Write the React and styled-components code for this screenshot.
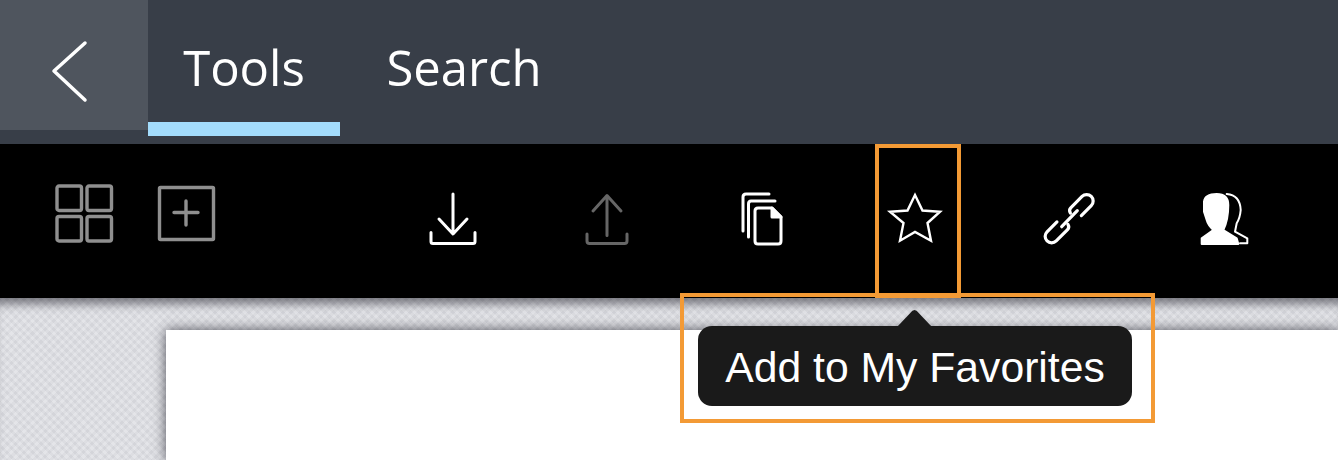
import React from "react";
import styled, { createGlobalStyle } from "styled-components";

const GlobalStyle = createGlobalStyle`
  html, body { margin: 0; padding: 0; background: #fff; }
  #root { width: 1338px; height: 460px; overflow: hidden; }
`;

const Page = styled.div`
  position: relative;
  display: flex;
  flex-direction: column;
  width: 1338px;
  height: 460px;
  overflow: hidden;
`;

const TopBar = styled.header`
  display: flex;
  align-items: flex-start;
  flex: 0 0 144px;
  background: #383e48;
`;

const BackButton = styled.div`
  display: flex;
  align-items: center;
  justify-content: center;
  width: 148px;
  height: 130px;
  padding: 14px 8px 0 0;
  box-sizing: border-box;
  background: #4f555e;
`;

const Tab = styled.div`
  display: flex;
  align-items: center;
  justify-content: center;
  box-sizing: border-box;
  width: ${(p) => p.$width}px;
  height: 136px;
  border-bottom: 14px solid ${(p) => (p.$active ? "#a3dcfc" : "transparent")};
  font-family: "Open Sans", sans-serif;
  font-size: 49px;
  color: #fff;
  padding-top: 12px;
`;

const Toolbar = styled.div`
  display: flex;
  align-items: flex-start;
  flex: 0 0 154px;
  background: #000;
`;

const LeftTools = styled.div`
  display: flex;
  gap: 42px;
  width: 376px;
  box-sizing: border-box;
  padding: 39px 0 0 54px;
`;

const ToolSlot = styled.div`
  display: flex;
  justify-content: center;
  width: 154px;
  padding-top: 46px;
`;

const Canvas = styled.main`
  position: relative;
  flex: 1;
  padding: 32px 0 0 166px;
  background-color: #dcdde2;
  background-image:
    repeating-linear-gradient(45deg, rgba(255, 255, 255, 0.12) 0 3px, rgba(0, 0, 0, 0.02) 3px 6px),
    repeating-linear-gradient(-45deg, rgba(255, 255, 255, 0.12) 0 3px, rgba(0, 0, 0, 0.02) 3px 6px);
  box-shadow: inset 0 12px 10px -6px rgba(50, 50, 60, 0.6);
`;

const Paper = styled.div`
  height: 100%;
  background: #fff;
  box-shadow: 0 0 12px rgba(30, 30, 40, 0.75);
`;

const Tooltip = styled.div`
  position: absolute;
  left: 698px;
  top: 326px;
  display: flex;
  align-items: center;
  justify-content: center;
  width: 434px;
  height: 80px;
  padding-top: 3px;
  box-sizing: border-box;
  border-radius: 14px;
  background: #1a1a1a;
  color: #fff;
  font-family: "Liberation Sans", Arial, sans-serif;
  font-size: 42.7px;

  &::before {
    content: "";
    position: absolute;
    left: 199px;
    top: -16px;
    width: 35px;
    height: 17px;
    background: #1a1a1a;
    clip-path: polygon(0 100%, 44% 4%, 50% 0, 56% 4%, 100% 100%);
  }
`;

const Highlight = styled.div`
  position: absolute;
  box-sizing: border-box;
  left: ${(p) => p.$left}px;
  top: ${(p) => p.$top}px;
  width: ${(p) => p.$width}px;
  height: ${(p) => p.$height}px;
  border: 4px solid #f39a35;
  pointer-events: none;
`;

const Icon = styled.svg`
  display: block;
  width: 60px;
  height: 60px;
  fill: none;
  stroke: ${(p) => p.$color || "#fff"};
  stroke-width: ${(p) => p.$weight || 3}px;
  stroke-linecap: round;
  stroke-linejoin: round;
`;

const Chevron = styled.svg`
  display: block;
  width: 40px;
  height: 64px;
  fill: none;
  stroke: #fff;
  stroke-width: 3.5px;
  stroke-linecap: round;
  stroke-linejoin: round;
`;

const BackIcon = () => (
  <Chevron viewBox="0 0 40 64">
    <path d="M35 3 L4 31 L35 60" />
  </Chevron>
);

const GridIcon = () => (
  <Icon viewBox="0 0 60 60" $color="#8f8f8f" $weight={3.4}>
    <rect x="3" y="3" width="24.5" height="24.5" rx="2" />
    <rect x="33" y="3" width="24.5" height="24.5" rx="2" />
    <rect x="3" y="33.5" width="24.5" height="24.5" rx="2" />
    <rect x="33" y="33.5" width="24.5" height="24.5" rx="2" />
  </Icon>
);

const AddIcon = () => (
  <Icon viewBox="0 0 60 60" $color="#8f8f8f" $weight={3.4}>
    <rect x="3.5" y="4.5" width="54" height="52" rx="1" />
    <path d="M18 29.5 H42 M30 18 V42" />
  </Icon>
);

const DownloadIcon = () => (
  <Icon viewBox="0 0 60 60">
    <path d="M30 4 V43 M16 29 L30 44 L44 29" />
    <path d="M8 42.5 V51.5 Q8 53.5 10 53.5 H50 Q52 53.5 52 51.5 V42.5" />
  </Icon>
);

const UploadIcon = () => (
  <Icon viewBox="0 0 60 60" $color="#666">
    <path d="M30 6 V45.5 M16 21 L30 5.5 L44 21" />
    <path d="M10 44 V51 Q10 53.5 12.5 53.5 H47.5 Q50 53.5 50 51 V44" />
  </Icon>
);

const CopyIcon = () => (
  <Icon viewBox="0 0 60 60">
    <path d="M12 41 V7 Q12 4 15 4 H38" />
    <path d="M17.5 47 V14 Q17.5 11 20 11 H44" />
    <path d="M27 18 H41 L50 27 V51 Q50 54 47 54 H27 Q24 54 24 51 V21 Q24 18 27 18 Z" />
    <path d="M41 18 V27 H50 Z" fill="#fff" />
  </Icon>
);

const StarIcon = () => (
  <Icon viewBox="0 0 60 60" $weight={2.4}>
    <path
      d="M30 5 L37.5 20.5 L55 21.7 L42.5 33 L46 50.7 L30 42 L15 50.7 L18.5 33 L5 21.7 L22.5 20.5 Z"
      strokeLinejoin="miter"
    />
  </Icon>
);

const linkPath = "M-12 -3 Q-11 -6.5 -8 -6.5 H8 A6.5 6.5 0 0 1 8 6.5 H-6";

const LinkIcon = () => (
  <Icon viewBox="0 0 60 60" $weight={3.2}>
    <path d={linkPath} transform="translate(42 16.7) rotate(-45)" />
    <path d={linkPath} transform="translate(18.3 40.7) rotate(135)" />
    <path d="M22.7 36.7 L38.3 20.7" />
  </Icon>
);

const PeopleIcon = () => (
  <Icon viewBox="3 0 60 60" $weight={2}>
    <path d="M36.7 4 Q50 5 50.7 20 Q50 28 46.7 33.3 L45 41.7 L57.3 48.3 V53.3 H50" />
    <path
      d="M14 11.7 Q15 4 26.7 4 Q38.3 4 38.3 15 Q38.3 30 33.3 40 L46.7 48.3 L48.3 54 H11.7 V48.3 L23.3 40 Q18 35 16.7 30 L14 21.7 Z"
      fill="#fff"
    />
  </Icon>
);

export default function App() {
  return (
    <Page>
      <GlobalStyle />
      <TopBar>
        <BackButton>
          <BackIcon />
        </BackButton>
        <Tab $width={192} $active>Tools</Tab>
        <Tab $width={248}>Search</Tab>
      </TopBar>
      <Toolbar>
        <LeftTools>
          <GridIcon />
          <AddIcon />
        </LeftTools>
        <ToolSlot><DownloadIcon /></ToolSlot>
        <ToolSlot><UploadIcon /></ToolSlot>
        <ToolSlot><CopyIcon /></ToolSlot>
        <ToolSlot><StarIcon /></ToolSlot>
        <ToolSlot><LinkIcon /></ToolSlot>
        <ToolSlot><PeopleIcon /></ToolSlot>
      </Toolbar>
      <Canvas>
        <Paper />
      </Canvas>
      <Tooltip>Add to My Favorites</Tooltip>
      <Highlight $left={875} $top={144} $width={86} $height={154} />
      <Highlight $left={680} $top={293} $width={475} $height={130} />
    </Page>
  );
}
